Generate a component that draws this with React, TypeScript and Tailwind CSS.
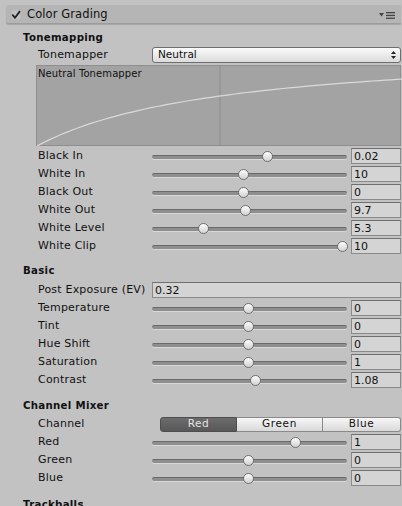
import React from 'react'

const FONT = { fontFamily: '"DejaVu Sans", Verdana, sans-serif' }

// thumb centre runs from x=157 to x=342 on the page (track starts at 152)
function Slider({ t, value }: { t: number; value: string }) {
  return (
    <div className="flex h-[18px] items-center">
      <div className="relative h-[18px] w-[199px]">
        <div className="absolute left-0 right-[4px] top-[8px] h-[4px] rounded-full border-t border-[#6a6a6a] bg-[#8e8e8e] shadow-[0_1px_0_#d8d8d8]" />
        <div
          className="absolute top-[4px] h-[11px] w-[11px] rounded-full border border-[#707070] bg-gradient-to-b from-[#fdfdfd] to-[#d2d2d2]"
          style={{ left: 5 + t * 185 - 5.5 }}
        />
      </div>
      <NumField value={value} className="w-[50px]" />
    </div>
  )
}

function NumField({ value, className = '' }: { value: string; className?: string }) {
  return (
    <div
      className={`flex h-[16px] items-center border border-[#8a8a8a] border-t-[#6f6f6f] bg-[#d4d4d4] pl-[2px] text-[11px] leading-none text-[#111] ${className}`}
    >
      {value}
    </div>
  )
}

function Row({ label, children }: { label: string; children: React.ReactNode }) {
  return (
    <div className="flex h-[18px] items-center">
      <div className="w-[116px] shrink-0 pl-[2px] text-[11px] tracking-[0.2px] text-[#111]">{label}</div>
      <div className="flex-1">{children}</div>
    </div>
  )
}

function Title({ children }: { children: React.ReactNode }) {
  return (
    <div className="h-[16px] pl-[23px] text-[10.2px] font-bold leading-[16px] tracking-[0.3px] text-[#111]">
      {children}
    </div>
  )
}

function Curve() {
  const pts: string[] = []
  for (let x = 0; x <= 366; x += 6) {
    const y = 80 - (101.5 * x) / (x + 188.5)
    pts.push(`${x},${y.toFixed(1)}`)
  }
  return (
    <svg className="absolute inset-0" width="366" height="80" viewBox="0 0 366 80">
      <line x1="183" y1="0" x2="183" y2="80" stroke="#8d8d8d" strokeWidth="1" />
      <polyline points={pts.join(' ')} fill="none" stroke="#dadada" strokeWidth="1.2" />
    </svg>
  )
}

export default function App() {
  return (
    <div className="h-[506px] w-[402px] overflow-hidden bg-[#c2c2c2] pr-[1px]" style={FONT}>
      {/* inspector header */}
      <div className="pt-[5px]">
        <div className="ml-[6px] flex h-[19px] items-center rounded-l-[3px] border-b border-[#9c9c9c] bg-[#b5b5b5] pt-[2px] shadow-[0_1px_1px_rgba(0,0,0,0.15)]">
          <svg className="ml-[5px]" width="10" height="10" viewBox="0 0 10 10">
            <rect x="0.5" y="0.5" width="9" height="9" rx="1.5" fill="#c9c9c9" opacity="0.6" />
            <path d="M1.8 5.2 L4 7.8 L8.6 1.6" fill="none" stroke="#222" strokeWidth="1.8" strokeLinecap="round" strokeLinejoin="round" />
          </svg>
          <span className="ml-[6px] text-[11.5px] tracking-[0.1px] text-[#111]">Color Grading</span>
          <div className="ml-auto mr-[6px] flex items-center gap-[2px]">
            <svg width="5" height="4" viewBox="0 0 5 4">
              <path d="M0 0 H5 L2.5 3.5 Z" fill="#444" />
            </svg>
            <svg width="9" height="7" viewBox="0 0 9 7">
              <rect x="0" y="0" width="9" height="1.3" fill="#444" />
              <rect x="0" y="2.8" width="9" height="1.3" fill="#444" />
              <rect x="0" y="5.6" width="9" height="1.3" fill="#444" />
            </svg>
          </div>
        </div>
      </div>

      {/* Tonemapping */}
      <div className="pl-[36px] pt-[6px]">
        <div className="-ml-[36px]">
          <Title>Tonemapping</Title>
        </div>
        <div className="flex h-[18px] items-center">
          <div className="w-[116px] shrink-0 pl-[2px] text-[11px] tracking-[0.2px] text-[#111]">Tonemapper</div>
          <div className="flex h-[16px] flex-1 items-center rounded-[3px] border border-[#6e6e6e] bg-gradient-to-b from-[#fafafa] to-[#dcdcdc] pl-[5px] text-[10.5px] text-[#111]">
            Neutral
            <svg className="ml-auto mr-[4px]" width="5" height="8" viewBox="0 0 5 8">
              <path d="M0 3 L2.5 0 L5 3 Z M0 5 L2.5 8 L5 5 Z" fill="#222" />
            </svg>
          </div>
        </div>
        <div className="relative mt-[1px] h-[81px] border border-[#8e8e8e] bg-[#a3a3a3]">
          <Curve />
          <div className="absolute left-[1px] top-[0px] text-[10px] tracking-[0.1px] text-[#111]">Neutral Tonemapper</div>
        </div>
        <div className="mt-[1px]">
          <Row label="Black In"><Slider t={0.595} value="0.02" /></Row>
          <Row label="White In"><Slider t={0.47} value="10" /></Row>
          <Row label="Black Out"><Slider t={0.47} value="0" /></Row>
          <Row label="White Out"><Slider t={0.48} value="9.7" /></Row>
          <Row label="White Level"><Slider t={0.254} value="5.3" /></Row>
          <Row label="White Clip"><Slider t={1} value="10" /></Row>
        </div>
      </div>

      {/* Basic */}
      <div className="pl-[36px] pt-[8px]">
        <div className="-ml-[36px]">
          <Title>Basic</Title>
        </div>
        <div className="mt-[2px]">
          <Row label="Post Exposure (EV)">
            <NumField value="0.32" className="w-full" />
          </Row>
          <Row label="Temperature"><Slider t={0.497} value="0" /></Row>
          <Row label="Tint"><Slider t={0.497} value="0" /></Row>
          <Row label="Hue Shift"><Slider t={0.497} value="0" /></Row>
          <Row label="Saturation"><Slider t={0.497} value="1" /></Row>
          <Row label="Contrast"><Slider t={0.535} value="1.08" /></Row>
        </div>
      </div>

      {/* Channel Mixer */}
      <div className="pl-[36px] pt-[9px]">
        <div className="-ml-[36px]">
          <Title>Channel Mixer</Title>
        </div>
        <div className="mt-[1px]">
          <div className="flex h-[18px] items-center">
            <div className="w-[124px] shrink-0 pl-[2px] text-[11px] tracking-[0.2px] text-[#111]">Channel</div>
            <div className="flex h-[15px] flex-1 text-[10.5px] tracking-[0.6px]">
              <div className="flex w-[77px] items-center justify-center rounded-l-[3px] border border-[#4e4e4e] bg-gradient-to-b from-[#6c6c6c] to-[#585858] text-[#e4e4e4]">
                Red
              </div>
              <div className="flex w-[86px] items-center justify-center border border-l-0 border-[#8a8a8a] bg-gradient-to-b from-[#f7f7f7] to-[#d9d9d9] text-[#111]">
                Green
              </div>
              <div className="flex flex-1 items-center justify-center rounded-r-[3px] border border-l-0 border-[#8a8a8a] bg-gradient-to-b from-[#f7f7f7] to-[#d9d9d9] text-[#111]">
                Blue
              </div>
            </div>
          </div>
          <Row label="Red"><Slider t={0.746} value="1" /></Row>
          <Row label="Green"><Slider t={0.497} value="0" /></Row>
          <Row label="Blue"><Slider t={0.497} value="0" /></Row>
        </div>
      </div>

      {/* Trackballs */}
      <div className="pt-[10px]">
        <Title>Trackballs</Title>
      </div>
    </div>
  )
}
